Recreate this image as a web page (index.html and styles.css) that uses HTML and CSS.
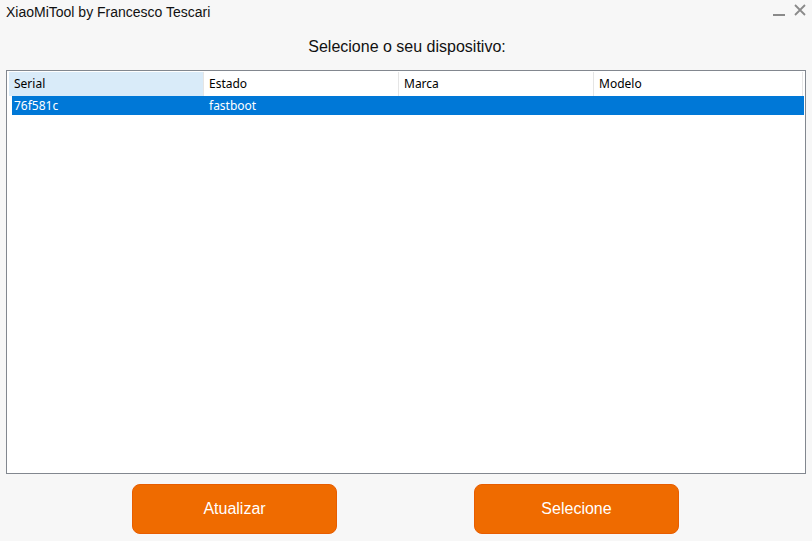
FILE: index.html
```html
<!DOCTYPE html>
<html>
<head>
<meta charset="utf-8">
<link rel="stylesheet" href="styles.css">
</head>
<body>
<div class="window">
  <div class="titlebar">
    <span class="title">XiaoMiTool by Francesco Tescari</span>
    <div class="controls">
      <svg class="ctl" width="14" height="14" viewBox="0 0 14 14"><line x1="1" y1="12" x2="13" y2="12" stroke="#8a8a8a" stroke-width="2"/></svg>
      <svg class="ctl" width="14" height="14" viewBox="0 0 14 14"><path d="M2 2 L12 12 M12 2 L2 12" stroke="#8a8a8a" stroke-width="1.8" fill="none"/></svg>
    </div>
  </div>
  <h1 class="heading">Selecione o seu dispositivo:</h1>
  <div class="table">
    <div class="thead">
      <div class="th active">Serial</div>
      <div class="th">Estado</div>
      <div class="th">Marca</div>
      <div class="th last">Modelo</div>
    </div>
    <div class="row selected">
      <div class="td first">76f581c</div>
      <div class="td">fastboot</div>
      <div class="td"></div>
      <div class="td"></div>
    </div>
  </div>
  <div class="actions">
    <button class="btn">Atualizar</button>
    <button class="btn">Selecione</button>
  </div>
</div>
</body>
</html>
```
FILE: styles.css
```css
html, body {
  margin: 0;
  padding: 0;
  background: #f7f7f7;
}
.window {
  width: 812px;
  height: 541px;
  display: flex;
  flex-direction: column;
  font-family: "Liberation Sans", Arial, sans-serif;
}
.titlebar {
  height: 26px;
  display: flex;
  align-items: flex-start;
  justify-content: space-between;
  padding: 3px 6px 0 6px;
  box-sizing: border-box;
}
.title {
  font-size: 14px;
  color: #111;
  line-height: 18px;
}
.controls {
  display: flex;
  gap: 7px;
  margin-right: -1px;
}
.ctl { display: block; }
.heading {
  margin: 11px 0 0 0;
  font-size: 16px;
  font-weight: normal;
  text-align: center;
  color: #111;
  line-height: 20px;
  height: 33px;
  padding-left: 2px;
}
.table {
  margin-left: 6px;
  width: 800px;
  height: 404px;
  box-sizing: border-box;
  border: 1px solid #82878f;
  background: #fff;
  padding: 1px 1px 0 1px;
  font-family: "Noto Sans", "Open Sans", sans-serif;
  font-size: 12px;
}
.thead {
  display: grid;
  grid-template-columns: 195px 195px 195px 210px;
  height: 24px;
  margin-right: 1px;
  border-right: 1px solid #e5e5e5;
  box-sizing: border-box;
}
.th {
  padding-left: 5px;
  line-height: 24px;
  color: #000;
  border-left: 1px solid #e5e5e5;
}
.th.active {
  background: #d9ebf9;
  margin-left: 1px;
  border-left: none;
  padding-left: 5px;
}
.row {
  display: grid;
  grid-template-columns: 191px 195px 195px 211px;
  margin-left: 4px;
  height: 19px;
  margin-top: 0;
}
.row.selected {
  background: #0078d7;
  color: #fff;
}
.td {
  padding-left: 6px;
  line-height: 19px;
}
.td.first { padding-left: 2px; }
.actions {
  display: flex;
  justify-content: flex-start;
  gap: 137px;
  padding-left: 132px;
  margin-top: 10px;
}
.btn {
  width: 205px;
  height: 50px;
  border: 1px solid #e85d00;
  background: #ef6b00;
  border-radius: 8px;
  color: #fff;
  font-family: "Liberation Sans", Arial, sans-serif;
  font-size: 16px;
  padding: 0;
  margin: 0;
}
```
